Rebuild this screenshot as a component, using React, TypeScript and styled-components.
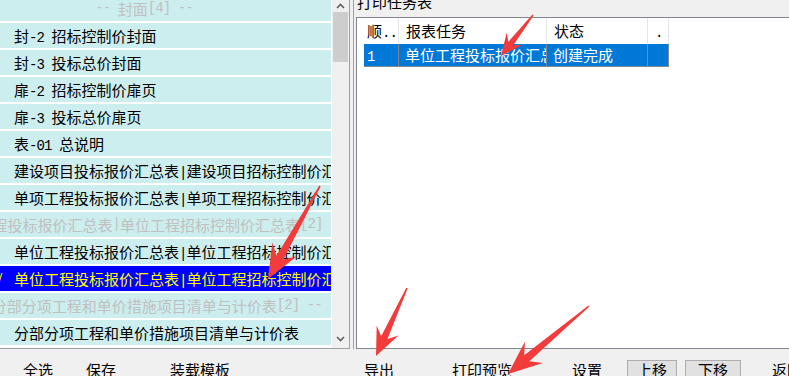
import React from "react";
import styled, { createGlobalStyle } from "styled-components";

const GlobalStyle = createGlobalStyle`
  html, body { margin: 0; padding: 0; background: #f0f0f0; }
  body {
    font-family: "Noto Sans CJK SC", "Noto Sans", sans-serif;
    font-size: 15px;
  }
`;

const Window = styled.div`
  position: relative;
  width: 789px;
  height: 376px;
  overflow: hidden;
  display: flex;
  flex-direction: column;
  background: #f0f0f0;
`;

const Main = styled.div`
  display: flex;
  height: 349px;
`;

const LeftPane = styled.div`
  width: 350px;
  box-sizing: border-box;
  display: flex;
  border-right: 1px solid #a0a0a0;
  border-bottom: 1px solid #a0a0a0;
`;

const ReportList = styled.div`
  width: 332px;
  background: #fff;
  overflow: hidden;
`;

const ListInner = styled.div`
  margin-top: -4px;
  display: flex;
  flex-direction: column;
  gap: 2px;
`;

const Row = styled.div<{ $sel?: boolean }>`
  width: 331px;
  height: 25px;
  line-height: 25px;
  padding-left: 14px;
  box-sizing: border-box;
  white-space: pre;
  overflow: hidden;
  background: ${(p) => (p.$sel ? "#0000ff" : "#cdeeee")};
  color: ${(p) => (p.$sel ? "#ffff00" : "#000")};
`;

const GroupRow = styled.div`
  width: 331px;
  height: 25px;
  line-height: 25px;
  overflow: hidden;
  background: #cdeeee;
  color: #c0c0c0;
`;

const GroupLabel = styled.div<{ $w: number }>`
  width: ${(p) => p.$w}px;
  display: flex;
  justify-content: center;
  white-space: pre;
`;

/* half-width latin run, like the bitmap font of the original */
const Half = styled.span`
  font-family: "Liberation Mono", "DejaVu Sans Mono", monospace;
  font-size: 14px;
  letter-spacing: -0.9px;
`;

const Check = styled.span`
  display: inline-block;
  width: 20px;
  margin-left: -20px;
  font-family: "Liberation Sans", sans-serif;
`;

const ScrollBar = styled.div`
  width: 17px;
  display: flex;
  flex-direction: column;
  align-items: center;
  background: #f0f0f0;
`;

const ScrollBtn = styled.div<{ $h: number }>`
  height: ${(p) => p.$h}px;
  display: flex;
  align-items: center;
  justify-content: center;
`;

const Thumb = styled.div`
  width: 15px;
  height: 50px;
  background: #cdcdcd;
`;

const Spacer = styled.div`
  flex: 1;
`;

const Splitter = styled.div`
  width: 4px;
  box-sizing: border-box;
  border-right: 1px solid #a0a0a0;
`;

const RightPane = styled.div`
  flex: 1;
  display: flex;
  flex-direction: column;
  padding-left: 2px;
`;

const PaneLabel = styled.div`
  height: 17px;
  line-height: 3px;
  padding-left: 1px;
  color: #000;
`;

const ListView = styled.div`
  flex: 1;
  background: #fff;
  border: 1px solid #828790;
  border-right: none;
  display: flex;
  flex-direction: column;
`;

const HeaderRow = styled.div`
  display: flex;
  height: 26px;
`;

const HeaderCell = styled.div<{ $w: number; $pl: number }>`
  width: ${(p) => p.$w}px;
  padding-left: ${(p) => p.$pl}px;
  box-sizing: border-box;
  line-height: 26px;
  border-right: 1px solid #e5e5e5;
  white-space: nowrap;
  overflow: hidden;
`;

const DataRow = styled.div`
  display: flex;
  height: 22px;
  margin-left: 7px;
  align-self: flex-start;
  background: #0078d7;
  color: #fff;
  border-bottom: 1px solid #7f8a95;
`;

const DataCell = styled.div<{ $w: number; $pl: number }>`
  width: ${(p) => p.$w}px;
  padding-left: ${(p) => p.$pl}px;
  box-sizing: border-box;
  line-height: 22px;
  border-right: 1px solid #7f8a95;
  white-space: nowrap;
  overflow: hidden;
`;

const Toolbar = styled.div`
  height: 27px;
  display: flex;
  align-items: flex-start;
  padding-top: 11px;
  box-sizing: border-box;
`;

const ToolButton = styled.div<{ $w: number; $ml: number; $raised?: boolean }>`
  flex-shrink: 0;
  width: ${(p) => p.$w}px;
  margin-left: ${(p) => p.$ml}px;
  height: 25px;
  box-sizing: border-box;
  padding-top: 1px;
  line-height: 15px;
  text-align: center;
  color: #000;
  background: ${(p) => (p.$raised ? "#e1e1e1" : "transparent")};
  border: 1px solid ${(p) => (p.$raised ? "#adadad" : "transparent")};
`;

const Overlay = styled.svg`
  position: absolute;
  left: 0;
  top: 0;
  pointer-events: none;
`;

type Item = { t: string; group?: number; sel?: boolean };

// group = width of the box the header text is centred in
const items: Item[] = [
  { t: "-- 封面[4] --", group: 288 },
  { t: "封-2 招标控制价封面" },
  { t: "封-3 投标总价封面" },
  { t: "扉-2 招标控制价扉页" },
  { t: "扉-3 投标总价扉页" },
  { t: "表-01 总说明" },
  { t: "建设项目投标报价汇总表|建设项目招标控制价汇总表" },
  { t: "单项工程投标报价汇总表|单项工程招标控制价汇总表" },
  { t: "-- 单位工程投标报价汇总表|单位工程招标控制价汇总表[2] --", group: 270 },
  { t: "单位工程投标报价汇总表|单位工程招标控制价汇总表" },
  { t: "单位工程投标报价汇总表|单位工程招标控制价汇总表", sel: true },
  { t: "-- 分部分项工程和单价措施项目清单与计价表[2] --", group: 291 },
  { t: "分部分项工程和单价措施项目清单与计价表" },
];

function txt(s: string) {
  return s
    .split(/([\x20-\x7e]+)/)
    .filter((p) => p !== "")
    .map((p, i) => (/^[\x20-\x7e]+$/.test(p) ? <Half key={i}>{p}</Half> : <React.Fragment key={i}>{p}</React.Fragment>));
}

// red annotation arrow: narrow tail, wide head
function arrow(x1: number, y1: number, x2: number, y2: number, hl: number, hw: number, sw: number) {
  const len = Math.hypot(x2 - x1, y2 - y1);
  const ux = (x2 - x1) / len;
  const uy = (y2 - y1) / len;
  const nx = -uy;
  const ny = ux;
  const bx = x2 - ux * hl * 0.72;
  const by = y2 - uy * hl * 0.72;
  const hx = x2 - ux * hl;
  const hy = y2 - uy * hl;
  const pts = [
    [x1 + nx * 0.8, y1 + ny * 0.8],
    [bx + (nx * sw) / 2, by + (ny * sw) / 2],
    [hx + (nx * hw) / 2, hy + (ny * hw) / 2],
    [x2, y2],
    [hx - (nx * hw) / 2, hy - (ny * hw) / 2],
    [bx - (nx * sw) / 2, by - (ny * sw) / 2],
    [x1 - nx * 0.8, y1 - ny * 0.8],
  ];
  return pts.map((p) => p.map((v) => v.toFixed(1)).join(",")).join(" ");
}

const Chevron = ({ up }: { up?: boolean }) => (
  <svg width="9" height="6" viewBox="0 0 9 6">
    <polyline
      points={up ? "1,5 4.5,1.5 8,5" : "1,1 4.5,4.5 8,1"}
      fill="none"
      stroke="#606060"
      strokeWidth="1.6"
    />
  </svg>
);

export default function App() {
  return (
    <Window>
      <GlobalStyle />
      <Main>
        <LeftPane>
          <ReportList>
            <ListInner>
              {items.map((it, i) =>
                it.group ? (
                  <GroupRow key={i}>
                    <GroupLabel $w={it.group}>{txt(it.t)}</GroupLabel>
                  </GroupRow>
                ) : (
                  <Row key={i} $sel={it.sel}>
                    {it.sel && <Check>√</Check>}
                    {txt(it.t)}
                  </Row>
                )
              )}
            </ListInner>
          </ReportList>
          <ScrollBar>
            <ScrollBtn $h={12}>
              <Chevron up />
            </ScrollBtn>
            <Thumb />
            <Spacer />
            <ScrollBtn $h={19}>
              <Chevron />
            </ScrollBtn>
          </ScrollBar>
        </LeftPane>
        <Splitter />
        <RightPane>
          <PaneLabel>打印任务表</PaneLabel>
          <ListView>
            <HeaderRow>
              <HeaderCell $w={42} $pl={10}>{txt("顺..")}</HeaderCell>
              <HeaderCell $w={148} $pl={7}>报表任务</HeaderCell>
              <HeaderCell $w={101} $pl={7}>状态</HeaderCell>
              <HeaderCell $w={21} $pl={7}>{txt(".")}</HeaderCell>
            </HeaderRow>
            <DataRow>
              <DataCell $w={35} $pl={3}>{txt("1")}</DataCell>
              <DataCell $w={148} $pl={6}>{txt("单位工程投标报价汇总表|单位工程招标控制价汇总表")}</DataCell>
              <DataCell $w={101} $pl={6}>创建完成</DataCell>
              <DataCell $w={21} $pl={6}></DataCell>
            </DataRow>
          </ListView>
        </RightPane>
      </Main>
      <Toolbar>
        <ToolButton $w={60} $ml={8}>全选</ToolButton>
        <ToolButton $w={60} $ml={3}>保存</ToolButton>
        <ToolButton $w={80} $ml={29}>装载模板</ToolButton>
        <ToolButton $w={60} $ml={109}>导出</ToolButton>
        <ToolButton $w={80} $ml={33}>打印预览</ToolButton>
        <ToolButton $w={60} $ml={35}>设置</ToolButton>
        <ToolButton $w={50} $ml={10} $raised>上移</ToolButton>
        <ToolButton $w={56} $ml={8} $raised>下移</ToolButton>
        <ToolButton $w={60} $ml={16}>返回</ToolButton>
      </Toolbar>
      <Overlay width="789" height="376" viewBox="0 0 789 376">
        <g fill="#f23c3c">
          <polygon points={arrow(533, 15, 501, 56, 22, 20, 6)} />
          <polygon points={arrow(320, 186, 268, 279, 34, 28, 8)} />
          <polygon points={arrow(407, 288, 376, 356, 28, 24, 7)} />
          <polygon points={arrow(589, 306, 508, 374, 34, 28, 8)} />
        </g>
      </Overlay>
    </Window>
  );
}
